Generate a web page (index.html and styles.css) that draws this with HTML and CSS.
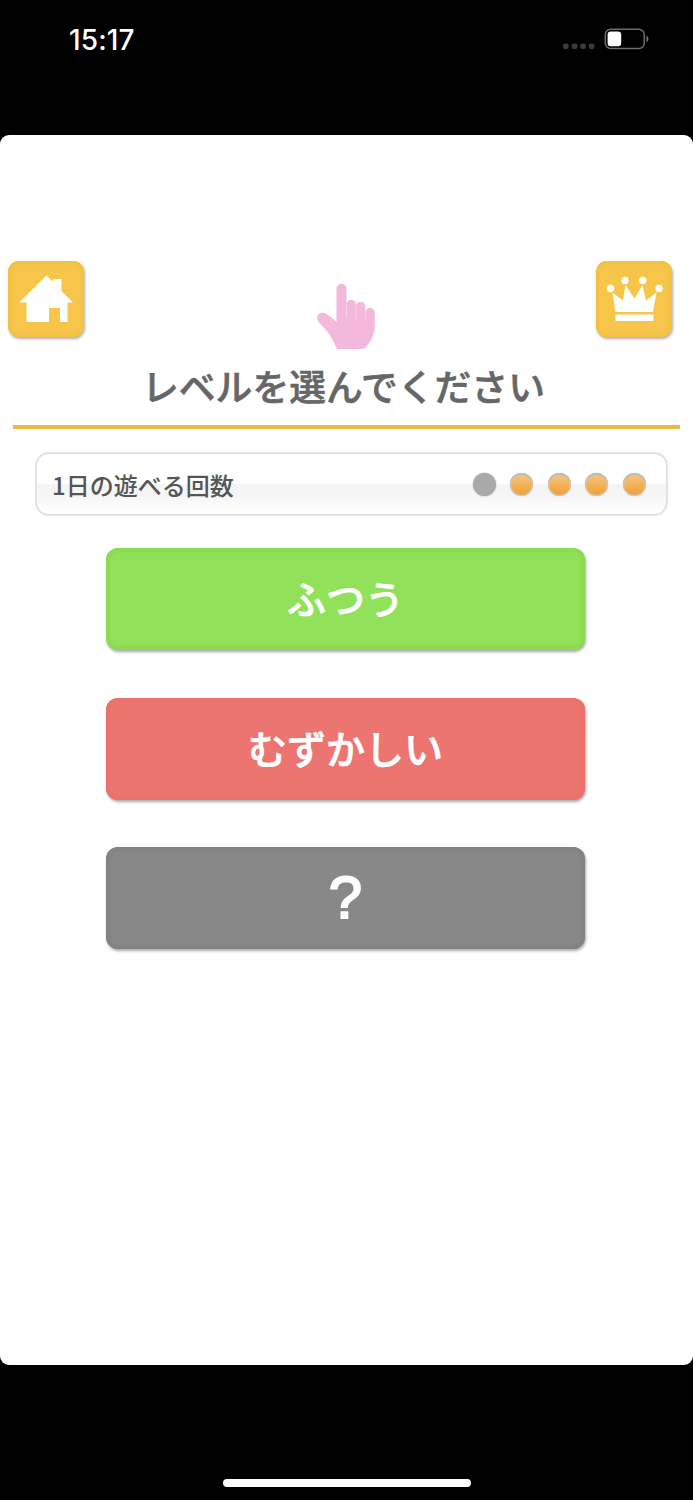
FILE: index.html
```
<!DOCTYPE html>
<html lang="ja">
<head>
<meta charset="utf-8">
<title>レベルを選んでください</title>
<link rel="stylesheet" href="styles.css">
</head>
<body>
<div class="status">
  <span class="time">15:17</span>
  <svg class="signal" width="34" height="8" viewBox="0 0 34 8" fill="#3b3b3b">
    <rect x="1" y="1.5" width="5.6" height="5.6" rx="1.8"/>
    <rect x="9.7" y="1.5" width="5.6" height="5.6" rx="1.8"/>
    <rect x="18.3" y="1.5" width="5.6" height="5.6" rx="1.8"/>
    <rect x="26.8" y="1.5" width="5.6" height="5.6" rx="1.8"/>
  </svg>
  <svg class="battery" width="46" height="22" viewBox="0 0 46 22">
    <rect x="1.3" y="1.2" width="39" height="19.4" rx="5.5" fill="none" stroke="#6d6d6d" stroke-width="1.5"/>
    <rect x="3.6" y="3.6" width="13.6" height="14.6" rx="3.2" fill="#fff"/>
    <path d="M42.5 7.6q2 1.2 2 3.3t-2 3.3z" fill="#777"/>
  </svg>
</div>
<div class="screen">
  <div class="head">
    <a class="icon">
      <svg width="76" height="76" viewBox="0 0 76 76" fill="#fff">
        <path d="M11 41.5L38.5 14.5L45 20.5V18H53.5V30L65 41.5H59.5V61H52V47H41V61H18.5V41.5Z"/>
      </svg>
    </a>
    <svg class="hand" width="59" height="67" viewBox="0 0 59 67" fill="#f4b9da">
      <path d="M19.500 39V5.800a5 5 0 0 1 10 0V21.500a4.500 4.500 0 0 1 9.300 0V23.500a4.500 4.500 0 0 1 9.600 0V29.500a4.600 4.600 0 0 1 9.300 0V43C57.700 53 53 60 47 66H20C17 59 14 53 9.500 47.500L2 39.500C-3 32 4 27.500 9.500 31Q15 34.500 19.500 39Z"/>
      <path d="M29.500 21V35M38.800 22V36M48.300 28V36" stroke="#f9dcec" stroke-width=".7"/>
    </svg>
    <a class="icon">
      <svg width="76" height="76" viewBox="0 0 76 76" fill="#fff">
        <path d="M16.500 31.500L27 39.500L29.500 24L38.500 37.500L46.500 24L50 39.500L60.500 31.500L57 51H19.500Z"/>
        <path d="M19.500 53.500H57.500V60H19.500Z"/>
        <circle cx="14.500" cy="27.500" r="3.700"/>
        <circle cx="29" cy="19.500" r="3.700"/>
        <circle cx="46.800" cy="19.500" r="3.700"/>
        <circle cx="63" cy="27.500" r="3.700"/>
      </svg>
    </a>
  </div>
  <h1>レベルを選んでください</h1>
  <div class="count">
    <span class="label">1日の遊べる回数</span>
    <i class="dot used"></i>
    <i class="dot"></i>
    <i class="dot"></i>
    <i class="dot"></i>
    <i class="dot"></i>
  </div>
  <div class="levels">
    <a class="btn normal">ふつう</a>
    <a class="btn hard">むずかしい</a>
    <a class="btn secret">?</a>
  </div>
</div>
<div class="bar"></div>
</body>
</html>
```

FILE: styles.css
```
* {
  box-sizing: border-box;
  margin: 0;
  padding: 0;
}
body {
  width: 693px;
  height: 1500px;
  background: #000;
  overflow: hidden;
  font-family: "Noto Sans CJK JP", sans-serif;
}
/* status bar */
.status {
  display: flex;
  height: 135px;
  padding: 24px 43px 0 69px;
  align-items: flex-start;
}
.time {
  flex: 1;
  color: #fff;
  font: 500 28px/33px Inter, sans-serif;
  letter-spacing: 0.1px;
}
.signal {
  margin: 18px 8px 0 0;
}
.battery {
  margin-top: 4px;
}
.screen {
  height: 1230px;
  padding-top: 126px;
  background: #fff;
  border-radius: 9px;
}
.head {
  display: flex;
  justify-content: space-between;
  align-items: flex-start;
  height: 96px;
  padding: 0 21px 0 8px;
}
.icon {
  width: 76px;
  height: 76px;
  background: #f6c549;
  border-radius: 11px;
  box-shadow: 1px 2px 3px rgba(0,0,0,.32), inset 0 0 2px 3px #f3c145;
}
.icon svg {
  display: block;
}
.hand {
  margin: 22px 0 0 13px;
}
h1 {
  height: 72px;
  margin: 0 13px;
  padding-right: 6px;
  border-bottom: 4px solid #ebbb42;
  color: #666;
  font-size: 36.800px;
  font-weight: 500;
  line-height: 56px;
  text-align: center;
  -webkit-text-stroke: .6px #666;
}
/* remaining plays */
.count {
  display: flex;
  align-items: center;
  width: 633px;
  height: 64px;
  margin: 23px 0 0 35px;
  padding: 0 20px 0 15px;
  border: 2px solid #e3e3e3;
  border-radius: 14px;
  background: linear-gradient(#fff 50%, #f4f4f4 51%, #f6f6f6 70%, #fff 95%);
}
.label {
  flex: 1;
  color: #555;
  font-size: 24px;
  font-weight: 500;
}
.dot {
  width: 23px;
  height: 23px;
  margin-left: 14.600px;
  border-radius: 50%;
  background: linear-gradient(#f5c782, #f29e32);
  box-shadow: inset 0 2px 0 #bbb, inset 0 0 0 1px #ccc, 0 0 2px #ddd;
}
.used {
  background: #a9a9a9;
  box-shadow: 0 0 2px #bbb;
}
.levels {
  display: flex;
  flex-direction: column;
  gap: 47.500px;
  width: 479px;
  margin: 32px 0 0 106px;
}
.btn {
  height: 102px;
  border-radius: 12px;
  color: #fff;
  font-size: 39px;
  font-weight: 500;
  line-height: 99px;
  text-align: center;
  -webkit-text-stroke: .7px #fff;
}
.normal {
  background: #92e15a;
  box-shadow: 1px 2px 3px rgba(0,0,0,.35), inset 0 0 2px 4px #8adc51;
}
.hard {
  background: #ed7571;
  box-shadow: 1px 2px 3px rgba(0,0,0,.35), inset 0 0 2px 4px #ec706b;
}
.secret {
  background: #888;
  box-shadow: 1px 2px 3px rgba(0,0,0,.35), inset 0 0 2px 4px #838383;
  font-family: "Liberation Sans", sans-serif;
  font-size: 60px;
  line-height: 101px;
  -webkit-text-stroke: 2px #fff;
}
/* home indicator */
.bar {
  width: 248px;
  height: 8px;
  margin: 114px auto 0;
  border-radius: 4px;
  background: #fff;
}
```
